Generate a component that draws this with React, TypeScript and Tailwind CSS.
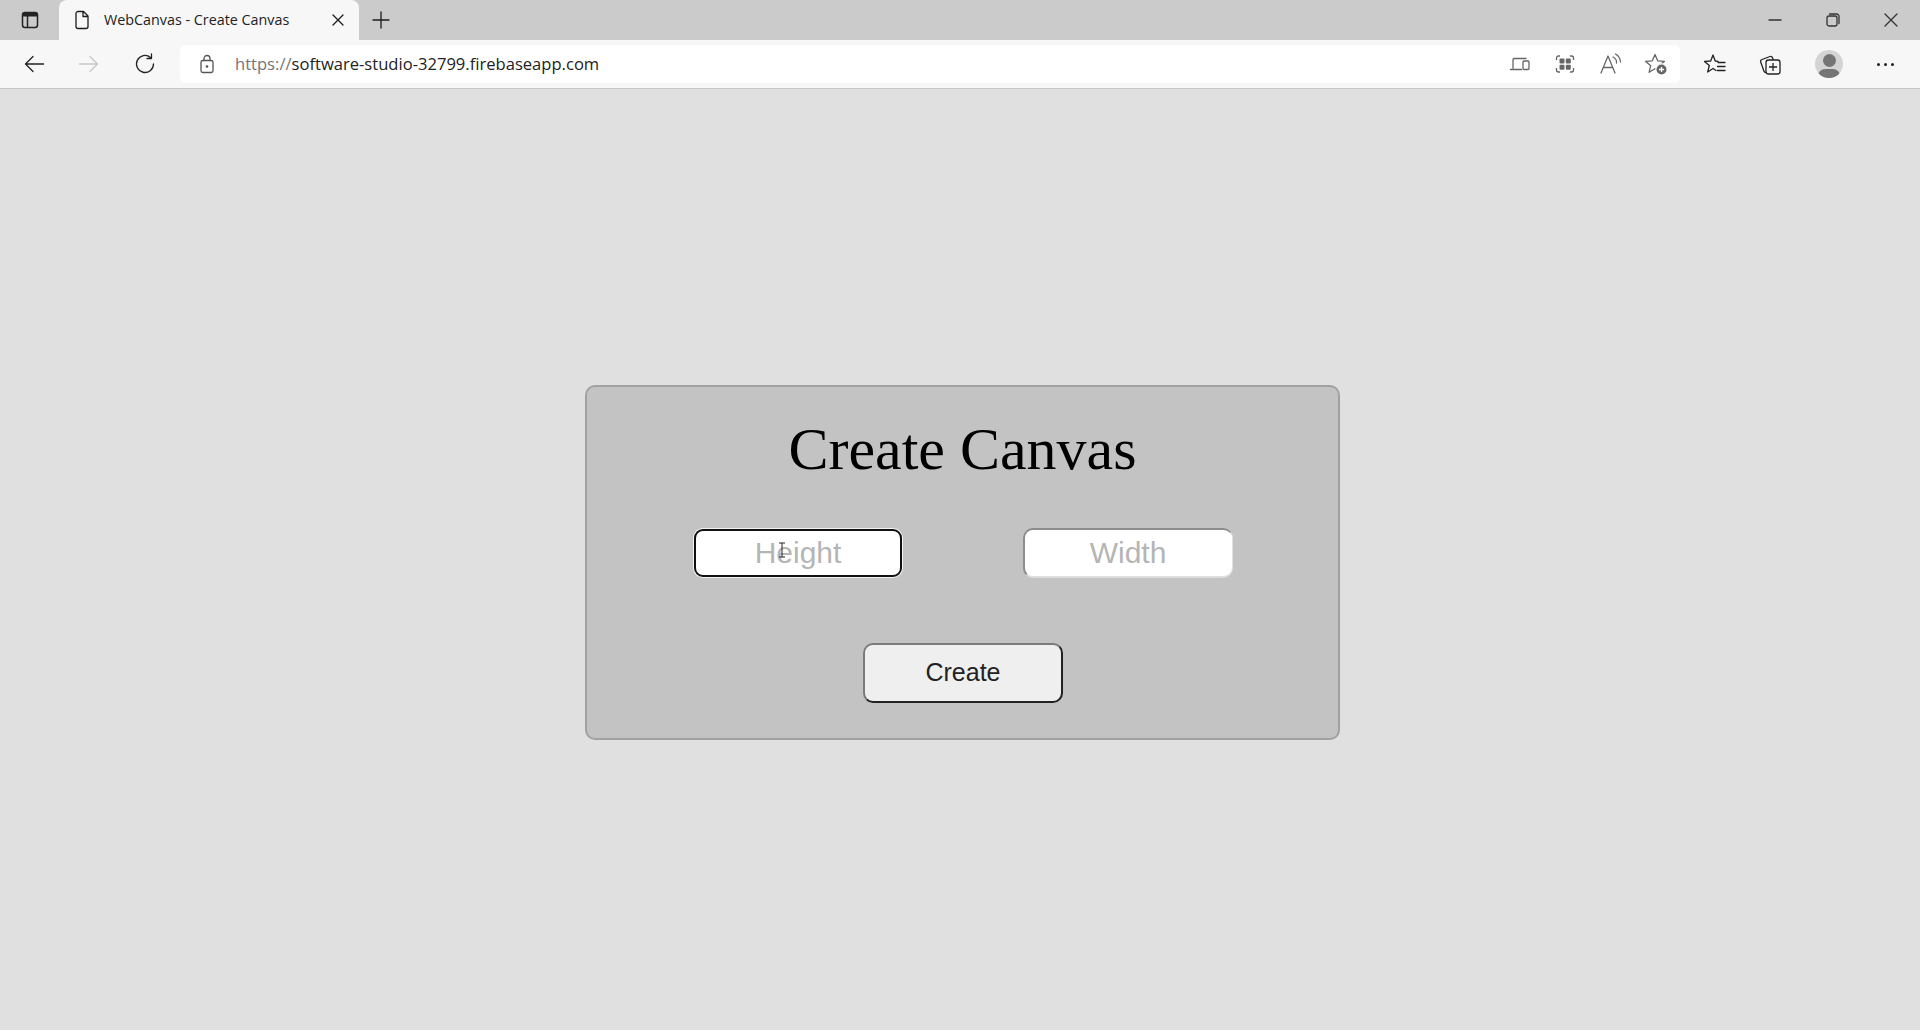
import React from "react";

const stroke = { fill: "none", stroke: "currentColor", strokeWidth: 1.3, strokeLinecap: "round" as const, strokeLinejoin: "round" as const };

function Ic({ w = 20, h = 20, vb = "0 0 20 20", cls = "", children }: { w?: number; h?: number; vb?: string; cls?: string; children: React.ReactNode }) {
  return (
    <svg width={w} height={h} viewBox={vb} className={cls} {...stroke}>
      {children}
    </svg>
  );
}

export default function App() {
  return (
    <div className="w-[1920px] h-[1030px] flex flex-col overflow-hidden bg-[#e0e0e0] font-['Liberation_Sans',sans-serif]">
      {/* tab strip */}
      <div className="h-10 shrink-0 bg-[#cbcbcb] flex items-start text-[#1c1c1c]">
        <div className="w-[59px] h-10 flex items-center justify-center">
          <svg width="20" height="20" viewBox="0 0 20 20">
            <rect x="2.500" y="2.500" width="15" height="15" rx="2.500" fill="none" stroke="#222" strokeWidth="1.500" />
            <path d="M2.500 5a2.500 2.500 0 0 1 2.500-2.500h10a2.500 2.500 0 0 1 2.500 2.500v1.500h-15z" fill="#222" />
            <path d="M7.500 6v11" stroke="#222" strokeWidth="1.500" />
          </svg>
        </div>
        <div className="w-[300px] h-10 bg-[#f7f7f7] rounded-t-lg flex items-center pl-[13px] pr-[14px]">
          <Ic w={20} h={20}>
            <path d="M6 1.500h5.500L16 6v10.500a2 2 0 0 1-2 2H6a2 2 0 0 1-2-2v-13a2 2 0 0 1 2-2zM11 1.500V6.500h5" />
          </Ic>
          <span className="ml-[12px] text-[15px] leading-5 -mt-[2px] text-[#222] font-['Open_Sans',sans-serif] flex-1 whitespace-nowrap scale-x-[0.955] origin-left">WebCanvas - Create Canvas</span>
          <Ic w={14} h={14} vb="0 0 14 14"><path d="M2 2l10 10M12 2L2 12" /></Ic>
        </div>
        <div className="ml-1 w-9 h-10 flex items-center justify-center">
          <Ic w={20} h={20}><path d="M10 2v16M2 10h16" /></Ic>
        </div>
        <div className="flex-1" />
        <div className="flex h-10 items-center text-[#333]">
          <div className="w-[58px] flex justify-center"><Ic w={14} h={14} vb="0 0 14 14"><path d="M1 7h12" /></Ic></div>
          <div className="w-[58px] flex justify-center">
            <Ic w={14} h={14} vb="0 0 14 14"><rect x="1" y="3" width="10" height="10" rx="2" /><path d="M3.500 1h7A2.500 2.500 0 0 1 13 3.500v7" /></Ic>
          </div>
          <div className="w-[58px] flex justify-center"><Ic w={14} h={14} vb="0 0 14 14"><path d="M1 1l12 12M13 1L1 13" /></Ic></div>
        </div>
      </div>

      {/* toolbar */}
      <div className="h-[49px] shrink-0 bg-[#f7f7f7] border-b border-[#c8c8c8] flex items-center text-[#222]">
        <div className="w-[68px] shrink-0 flex justify-center">
          <Ic w={22} h={22} vb="0 0 22 22"><path d="M2.500 11h18M2.500 11l7.500-7.500M2.500 11l7.500 7.500" /></Ic>
        </div>
        <div className="w-[42px] shrink-0 flex justify-center text-[#c8c8c8]">
          <Ic w={22} h={22} vb="0 0 22 22"><path d="M1.500 11h18M19.500 11L12 3.500M19.500 11L12 18.500" /></Ic>
        </div>
        <div className="w-[70px] shrink-0 flex justify-center">
          <Ic w={22} h={22} vb="0 0 22 22"><path d="M19.500 11a8.500 8.500 0 1 1-3-6.500M17.500 1v4.500H13" /></Ic>
        </div>
        <div className="w-[1500px] shrink-0 h-[38px] bg-white rounded-md flex items-center">
          <div className="w-[54px] flex justify-center text-[#555]">
            <Ic w={18} h={20} vb="0 0 18 20">
              <rect x="3" y="6.500" width="12" height="12" rx="1.800" />
              <path d="M6 6.500V4.500a3 3 0 0 1 6 0v2" />
              <circle cx="9" cy="12.500" r="0.700" fill="currentColor" />
            </Ic>
          </div>
          <span className="text-[17px] leading-5 font-['Open_Sans',sans-serif] whitespace-nowrap scale-x-[0.975] origin-left ml-[1px]">
            <span className="text-[#757575]">https://</span>
            <span className="text-[#222]">software-studio-32799.firebaseapp.com</span>
          </span>
          <div className="flex-1" />
          <div className="flex items-center gap-[21px] pr-[12px] text-[#666]">
            <Ic w={24} h={20} vb="0 0 24 20">
              <path d="M5 14V5.500A1 1 0 0 1 6 4.500h12M2.500 15.500h11" />
              <rect x="15" y="7" width="6" height="8.500" rx="1" />
            </Ic>
            <svg width="24" height="24" viewBox="0 0 24 24" className="mr-[1px]">
              <path d="M7 4H5.500A2 2 0 0 0 3.500 6v2M17 4h1.500a2 2 0 0 1 2 2v2M7 20H5.500a2 2 0 0 1-2-2v-2M17 20h1.500a2 2 0 0 0 2-2v-2" fill="none" stroke="#666" strokeWidth="1.300" />
              <rect x="6.500" y="6.500" width="5" height="5" rx="1" fill="#666" />
              <rect x="12.800" y="6.500" width="5" height="5" rx="1" fill="#666" />
              <rect x="6.500" y="12.800" width="5" height="5" rx="1" fill="#666" />
              <rect x="12.800" y="12.800" width="5" height="5" rx="1" fill="#666" />
            </svg>
            <Ic w={24} h={24} vb="0 0 24 24">
              <path d="M2 21L9 4l7 17M4.500 15.500h9M14 5a6 6 0 0 1 3.500 6M16.500 2a10 10 0 0 1 5 8" />
            </Ic>
            <svg width="24" height="24" viewBox="0 0 24 24">
              <path d="M11 2.500l2.700 6.300 6.800.5-5.200 4.400 1.600 6.600L11 16.700l-5.900 3.600 1.600-6.600L1.500 9.300l6.800-.5z" fill="none" stroke="#666" strokeWidth="1.300" strokeLinejoin="round" />
              <circle cx="17.500" cy="17.500" r="6.200" fill="#fff" />
              <circle cx="17.500" cy="17.500" r="5" fill="#666" />
              <path d="M17.500 15v5M15 17.500h5" stroke="#fff" strokeWidth="1.300" />
            </svg>
          </div>
        </div>
        <div className="w-[70px] shrink-0 flex justify-center text-[#222]">
          <Ic w={24} h={24} vb="0 0 24 24">
            <path d="M15 9.300l-2.800-.3L10 3 7.700 9l-6.200.4 4.800 4.100L4.700 20l5.300-3.500 3 2M15 10.500h7M14.500 14.500h7.500M14.500 18.500h7.500" />
          </Ic>
        </div>
        <div className="w-[40px] shrink-0 flex justify-center">
          <svg width="24" height="24" viewBox="0 0 24 24" fill="none" stroke="#222" strokeWidth="1.300" strokeLinejoin="round">
            <path d="M8 20.500c-1 0-1.700-.5-2-1.300L2.700 10A2 2 0 0 1 4 7.500l8-3a2 2 0 0 1 2.500 1.200l.7 2" />
            <rect x="8" y="8" width="14" height="14" rx="2.500" fill="#f7f7f7" />
            <path d="M15 11v8M11 15h8" />
          </svg>
        </div>
        <div className="w-[78px] shrink-0 flex justify-center">
          <div className="w-7 h-7 rounded-full bg-[#d4d4d4] overflow-hidden flex flex-col items-center">
            <div className="w-[13px] h-[13px] rounded-full bg-[#757575] mt-[4px] shrink-0" />
            <div className="w-[22px] h-[14px] rounded-full bg-[#757575] mt-[2px] shrink-0" />
          </div>
        </div>
        <div className="w-[34px] shrink-0 flex justify-center gap-[4px]">
          <div className="w-[3px] h-[3px] rounded-full bg-[#222]" />
          <div className="w-[3px] h-[3px] rounded-full bg-[#222]" />
          <div className="w-[3px] h-[3px] rounded-full bg-[#222]" />
        </div>
      </div>

      {/* page */}
      <div className="flex-1 flex flex-col items-center pt-[296px]">
        <div className="ml-[5px] w-[755px] h-[355px] bg-[#c3c3c3] border-2 border-[#a1a1a1] rounded-[10px] flex flex-col items-center">
          <h1 className="mt-[29px] h-[66px] text-[60px] leading-[66px] font-normal text-black font-['Liberation_Serif',serif] whitespace-nowrap">
            Create Canvas
          </h1>
          <div className="mt-[46px] flex gap-[120px] ml-[1px]">
            <div className="relative m-[1px] w-[208px] h-[48px] bg-white border-2 border-[#111] rounded-[9px] shadow-[0_0_0_1px_#f2f2f2] flex items-center justify-center text-[30px] pb-[2px] text-[#b5b5b5]">
              Height
              <svg width="10" height="16" viewBox="0 0 10 16" className="absolute left-[81px] top-[11px]" fill="none" stroke="#222" strokeWidth="1">
                <path d="M2 1h6M2 15h6M5 1v14" />
              </svg>
            </div>
            <div className="w-[210px] h-[50px] bg-white border-t-2 border-l-2 border-r border-b-2 border-t-[#8c8c8c] border-l-[#8c8c8c] border-r-[#e0e0e0] border-b-[#dedede] rounded-[10px] flex items-center justify-center text-[30px] pb-[2px] pr-[1px] text-[#b5b5b5]">
              Width
            </div>
          </div>
          <button className="mt-[65px] ml-[1px] w-[200px] h-[60px] bg-[#efefef] border-2 border-t-[#7a7a7a] border-l-[#7a7a7a] border-r-[#222] border-b-[#222] rounded-[10px] text-[25px] text-[#222]">
            Create
          </button>
        </div>
      </div>
    </div>
  );
}
